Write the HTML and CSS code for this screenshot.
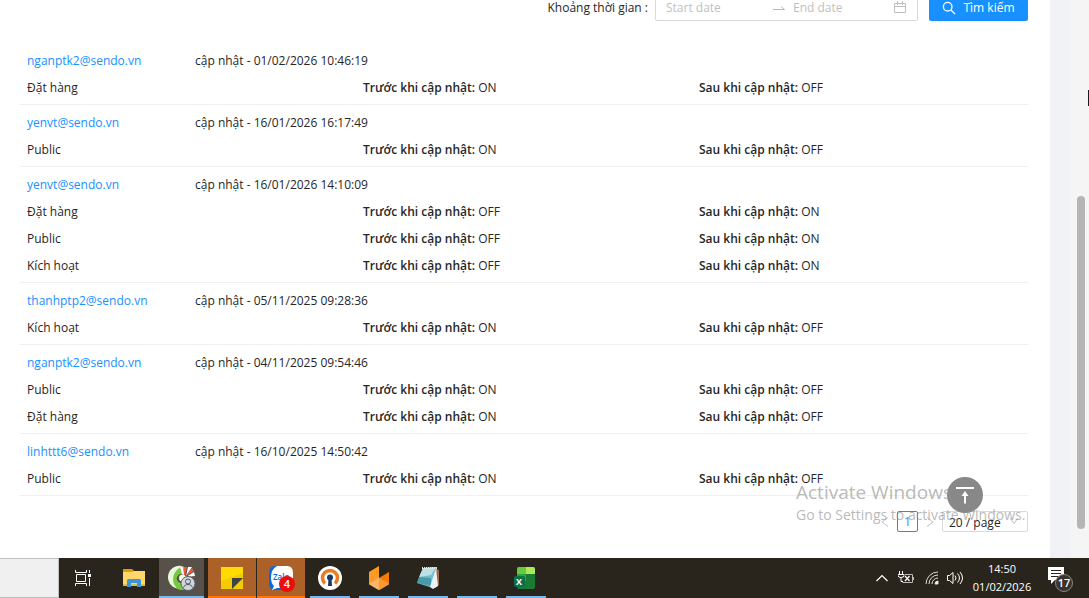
FILE: index.html
```html
<!DOCTYPE html>
<html lang="vi">
<head>
<meta charset="utf-8">
<title>Lịch sử cập nhật</title>
<link rel="stylesheet" href="styles.css">
</head>
<body>
<div class="viewport">
  <main class="content">
    <form class="filter">
      <label class="filter-label" for="start">Khoảng thời gian :</label>
      <div class="range">
        <input class="range-input" id="start" type="text" placeholder="Start date">
        <svg class="range-arrow" width="12" height="12" viewBox="0 0 12 12" fill="none" stroke="#b8b8b8"><path d="M0 7.5h11.5L8 4.5"/></svg>
        <input class="range-input range-end" type="text" placeholder="End date" aria-label="End date">
        <svg width="12" height="14" viewBox="0 0 12 14" fill="none" stroke="#bfbfbf"><path d="M.5 2.500h11v9H.5zM.5 5.500h11M3.500 0v4M8.500 0v4"/></svg>
      </div>
      <button class="search" type="button">
        <svg width="14" height="14" viewBox="0 0 14 14" fill="none" stroke="#fff" stroke-width="1.300"><circle cx="5.700" cy="5.700" r="4.300"/><path d="M9 9l4 4"/></svg>
        Tìm kiếm
      </button>
    </form>

    <section class="history">
      <article class="entry">
        <div class="row"><a class="user" href="#">nganptk2@sendo.vn</a><span class="when">cập nhật - 01/02/2026 10:46:19</span></div>
        <div class="row"><span class="field">Đặt hàng</span><span><b>Trước khi cập nhật:</b> ON</span><span><b>Sau khi cập nhật:</b> OFF</span></div>
      </article>
      <article class="entry">
        <div class="row"><a class="user" href="#">yenvt@sendo.vn</a><span class="when">cập nhật - 16/01/2026 16:17:49</span></div>
        <div class="row"><span class="field">Public</span><span><b>Trước khi cập nhật:</b> ON</span><span><b>Sau khi cập nhật:</b> OFF</span></div>
      </article>
      <article class="entry">
        <div class="row"><a class="user" href="#">yenvt@sendo.vn</a><span class="when">cập nhật - 16/01/2026 14:10:09</span></div>
        <div class="row"><span class="field">Đặt hàng</span><span><b>Trước khi cập nhật:</b> OFF</span><span><b>Sau khi cập nhật:</b> ON</span></div>
        <div class="row"><span class="field">Public</span><span><b>Trước khi cập nhật:</b> OFF</span><span><b>Sau khi cập nhật:</b> ON</span></div>
        <div class="row"><span class="field">Kích hoạt</span><span><b>Trước khi cập nhật:</b> OFF</span><span><b>Sau khi cập nhật:</b> ON</span></div>
      </article>
      <article class="entry">
        <div class="row"><a class="user" href="#">thanhptp2@sendo.vn</a><span class="when">cập nhật - 05/11/2025 09:28:36</span></div>
        <div class="row"><span class="field">Kích hoạt</span><span><b>Trước khi cập nhật:</b> ON</span><span><b>Sau khi cập nhật:</b> OFF</span></div>
      </article>
      <article class="entry">
        <div class="row"><a class="user" href="#">nganptk2@sendo.vn</a><span class="when">cập nhật - 04/11/2025 09:54:46</span></div>
        <div class="row"><span class="field">Public</span><span><b>Trước khi cập nhật:</b> ON</span><span><b>Sau khi cập nhật:</b> OFF</span></div>
        <div class="row"><span class="field">Đặt hàng</span><span><b>Trước khi cập nhật:</b> ON</span><span><b>Sau khi cập nhật:</b> OFF</span></div>
      </article>
      <article class="entry">
        <div class="row"><a class="user" href="#">linhttt6@sendo.vn</a><span class="when">cập nhật - 16/10/2025 14:50:42</span></div>
        <div class="row"><span class="field">Public</span><span><b>Trước khi cập nhật:</b> ON</span><span><b>Sau khi cập nhật:</b> OFF</span></div>
      </article>
    </section>

    <nav class="pager" aria-label="Pagination">
      <button class="step" type="button" aria-label="Previous page"><svg width="8" height="12" viewBox="0 0 8 12" fill="none" stroke="#bfbfbf"><path d="M7 1.500L1 6l6 4.500"/></svg></button>
      <button class="page" type="button">1</button>
      <button class="step" type="button" aria-label="Next page"><svg width="8" height="12" viewBox="0 0 8 12" fill="none" stroke="#bfbfbf"><path d="M1 1.500L7 6l-6 4.500"/></svg></button>
      <div class="size">
        <select class="size-select" aria-label="Page size"><option>20 / page</option></select>
        <svg class="size-arrow" width="10" height="10" viewBox="0 0 10 10" fill="none" stroke="#bfbfbf"><path d="M1 2l4 5.500L9 2"/></svg>
      </div>
    </nav>
  </main>
  <div class="gutter"></div>
  <div class="scrollbar"><div class="thumb"></div></div>
  <div class="caret"></div>
  <button class="to-top" type="button" aria-label="Back to top"><svg width="18" height="18" viewBox="0 0 18 18" fill="none" stroke="#fff" stroke-width="2"><path d="M0 2h18M9 17.500V7" /><path d="M5.500 10L9 5l3.500 5z" fill="#fff" stroke="none"/></svg></button>
  <div class="watermark">
    <div class="watermark-title">Activate Windows</div>
    <div class="watermark-text">Go to Settings to activate Windows.</div>
  </div>
</div>

<footer class="taskbar">
  <div class="searchbox"></div>
  <div class="apps">
    <button class="app" type="button" aria-label="Task view"><svg width="20" height="16" viewBox="0 0 20 16" fill="none" stroke="#fff"><path d="M.5 0v2.500h11V0M.5 16v-2.500h11V16M1.500 4.500h9v7h-9zM14.500 0v3M14.500 8v8"/><path d="M13 4h3v3h-3z" fill="#fff" stroke="none"/></svg></button>
    <button class="app" type="button" aria-label="File Explorer"><svg width="22" height="18" viewBox="0 0 22 18"><path d="M0 0h9l2 2h10v15H0z" fill="#e59a0c"/><path d="M0 3h9l2-1h11v15H0z" fill="#ffd76a"/><path d="M0 15h22v2H0z" fill="#e6b93f"/><path d="M4 18v-7l1-1h12l1 1v7h-4v-4H8v4z" fill="#3996dc"/></svg></button>
    <button class="app app-current" type="button" aria-label="Cốc Cốc"><svg width="28" height="28" viewBox="0 0 28 28"><path d="M14 3A11.500 11.500 0 1 0 19 25l-3-7a4.500 4.500 0 1 1-2-8z" fill="#78c83f"/><path d="M14 2A11.500 11.500 0 0 0 9 24.500 13 13 0 0 1 10 5z" fill="#e6f8d8"/><path d="M12 2.500h3.500L16 11l-2-1z" fill="#fff"/><path d="M15.500 3h3.500l-2 8h-1z" fill="#ed5a3b"/><path d="M20 3h4l-6 9z" fill="#fff"/><path d="M24 4l2 3-8 5z" fill="#ed5a3b"/><path d="M26 8l1 4-9 1z" fill="#fff"/><circle cx="14.500" cy="14" r="3.500" fill="#efffdf"/><circle cx="20" cy="19.500" r="7" fill="#cfd6de" stroke="#5c626a"/><circle cx="20" cy="17.500" r="2.500" fill="none" stroke="#4d5560"/><path d="M15.500 23.500c1-4 8-4 9 0" fill="none" stroke="#4d5560"/></svg></button>
    <button class="app app-alert" type="button" aria-label="Sticky Notes"><svg width="22" height="22" viewBox="0 0 22 22"><path d="M0 0h22v22H0z" fill="#ffdc00"/><path d="M0 14L22 6v16H0z" fill="#f3cb00"/><path d="M11 11h11L11 22z" fill="#3f4243"/></svg></button>
    <button class="app app-alert" type="button" aria-label="Zalo"><svg width="28" height="28" viewBox="0 0 28 28"><rect x="2" y="2" width="20" height="24" rx="6" fill="#0868e8"/><path d="M10 2h10q6 0 6 7v9q0 6-6 6H10l-5 2 2-4Q4 19 4 14q0-9 6-12z" fill="#fff"/><text x="6" y="16" class="zalo">Zalo</text><circle cx="20" cy="20" r="8" fill="#f00b0b"/><text x="20" y="24" class="badge">4</text></svg></button>
    <button class="app app-open" type="button" aria-label="OpenVPN"><svg width="24" height="24" viewBox="0 0 24 24"><circle cx="12" cy="12" r="12" fill="#fff"/><path d="M7 17.500a7.500 7.500 0 1 1 10 0" fill="none" stroke="#e97d27" stroke-width="3.500"/><circle cx="12" cy="11.500" r="3" fill="#1c3762"/><path d="M10.500 12h3l.5 8h-4z" fill="#1c3762"/></svg></button>
    <button class="app app-open" type="button" aria-label="Design app"><svg width="22" height="24" viewBox="0 0 22 24"><path d="M1 6l10-6v12L1 18z" fill="#ff9d20"/><path d="M1 6l10 6-10 6z" fill="#f99a2c"/><path d="M1 18l10-6v12z" fill="#ffb765"/><path d="M11 12l10 6-10 6z" fill="#ff9829"/><path d="M11 12l10-6v12z" fill="#f47b08"/><path d="M11 12l10 6-10 6-10-6z" fill="none" stroke="#ffc580" stroke-width=".5"/></svg></button>
    <button class="app app-open" type="button" aria-label="Notepad"><svg width="24" height="24" viewBox="0 0 24 24"><path d="M20 3l3 1v15l-4 3z" fill="#9b6840"/><path d="M7 2l14-1-4 21L1 17z" fill="#79bdcc"/><path d="M7 2l13-1-5 8-12 2z" fill="#b9e1e7"/><path d="M3 11l12 1v8L1 17z" fill="#499bac"/><path d="M20 2l2 18-5 3-3-2z" fill="#e9f2f5"/><path d="M6 2h15" stroke="#dfe9ea" stroke-width="2" stroke-dasharray="1 1"/></svg></button>
    <button class="app app-open" type="button" aria-label="Application"></button>
    <button class="app app-open" type="button" aria-label="Excel"><svg width="24" height="24" viewBox="0 0 24 24"><rect x="3" y="1" width="18" height="22" rx="2" fill="#187c34"/><path d="M3 3q0-2 2-2h7v7H3z" fill="#66cc3c"/><path d="M12 1h7q2 0 2 2v5h-9z" fill="#abeb5b"/><path d="M3 8h9v7H3z" fill="#2da144"/><rect y="10" width="11" height="11" rx="2" fill="#0d7048"/><text x="5" y="19" class="excel">X</text></svg></button>
  </div>
  <div class="tray">
    <svg width="12" height="8" viewBox="0 0 12 8" fill="none" stroke="#fff" stroke-width="1.200"><path d="M.5 7L6 1.500 11.500 7"/></svg>
    <svg width="16" height="14" viewBox="0 0 16 14" fill="none" stroke="#fff"><path d="M1.500 0v3M4.500 0v3M0 3.500h6v1q0 2-3 2t-3-2zM3 7v3.500h2" /><path d="M7 3.500h7.500v8H4.500M15.500 6v3" stroke="#bbb"/><path d="M7 5l4.500 5M11.500 5L7 10" stroke-width="1.200"/></svg>
    <svg width="14" height="14" viewBox="0 0 14 14" fill="none" stroke="#ddd"><path d="M1 13A12 12 0 0 1 13 1M4 13a9 9 0 0 1 9-9M7 13a6 6 0 0 1 6-6" /><path d="M10 13a3 3 0 0 1 3-3v3z" fill="#fff"/></svg>
    <svg width="17" height="14" viewBox="0 0 17 14" fill="none" stroke="#fff"><path d="M.5 4.500h2L6 1.500v11l-3.500-3h-2zM8 4.500q2 2.500 0 5M10.500 2.500q4 4.500 0 9M13 1q5 6 0 12"/></svg>
    <div class="clock"><div>14:50</div><div>01/02/2026</div></div>
    <button class="notices" type="button" aria-label="Notifications"><svg width="28" height="28" viewBox="0 0 28 28"><path d="M1 3h16v13H8l-4 4v-4H1z" fill="#fff"/><path d="M4 6.500h10M4 9.500h10M4 12.500h7" stroke="#2a241d"/><circle cx="17" cy="19" r="8.500" fill="#39342f" stroke="#8a8580"/><text x="17" y="23" class="badge">17</text></svg></button>
  </div>
</footer>
</body>
</html>
```

FILE: styles.css
```css
* { box-sizing: border-box; }
body {
  margin: 0;
  height: 100vh;
  display: flex;
  flex-direction: column;
  overflow: hidden;
  background: #fff;
  color: #262626;
  font: 12px/20px "Open Sans", "Noto Sans", sans-serif;
}
button, input, select { font: inherit; color: inherit; margin: 0; }
button { padding: 0; border: 0; background: none; }
svg { display: block; flex: none; }

.viewport { position: relative; flex: 1; min-height: 0; display: flex; overflow: hidden; }
.content { flex: 1; padding: 0 22px 0 20px; }
.gutter { width: 20px; background: #f0f2f5; }
.scrollbar { width: 19px; background: #f5f5f5; padding: 196px 4px 29px 7px; display: flex; }
.thumb { flex: 1; border-radius: 4px; background: #b5b5b5; }
.caret { position: absolute; right: 0; top: 90px; width: 1px; height: 16px; background: #1a1a24; }

/* Filter bar, scrolled partly out of view */
.filter { display: flex; justify-content: flex-end; align-items: center; margin-top: -5px; }
.filter-label { margin-right: 7px; }
.range {
  display: flex; align-items: center; width: 263px; height: 26px;
  padding: 0 11px 0 10px; border: 1px solid #d9d9d9; border-radius: 2px; margin-right: 11px;
}
.range-input { flex: 1; width: 0; min-width: 0; border: 0; padding: 0; outline: 0; background: none; }
.range-end { flex: none; width: 101px; }
.range-input::placeholder { color: #bfbfbf; opacity: 1; }
.range-arrow { margin-right: 8px; }
.search {
  display: flex; align-items: center; justify-content: center; gap: 7px;
  width: 99px; height: 26px; border-radius: 2px; background: #1890ff; color: #fff;
}

.history { margin-top: 22px; }
.entry { padding: 4px 0 3px; border-bottom: 1px solid #f0f0f0; }
.row { display: grid; grid-template-columns: 1fr 1fr 2fr 2fr; line-height: 27px; }
.row > * { padding-left: 7px; }
.user { color: #1890ff; text-decoration: none; }
.when { grid-column: span 2; }
.field { grid-column: span 2; }
b { font-weight: 600; }

.pager { display: flex; justify-content: flex-end; align-items: center; margin-top: 15px; }
.page { width: 21px; height: 21px; margin: 0 8px; border: 1px solid #1890ff; border-radius: 2px; color: #1890ff; line-height: 19px; }
.size { position: relative; margin-left: 8px; }
.size-select {
  display: block; width: 86px; height: 21px; padding: 1px 6px 0; border: 1px solid #d9d9d9; border-radius: 2px;
  background: none; appearance: none; line-height: 19px;
}
.size-arrow { position: absolute; right: 9px; top: 5px; }

.to-top {
  position: absolute; right: 106px; bottom: 45px; width: 36px; height: 36px; border-radius: 50%;
  background: #888; display: flex; align-items: center; justify-content: center;
}
.watermark { position: absolute; right: 57px; bottom: 33px; width: 236px; color: rgba(145, 145, 145, .65); white-space: nowrap; pointer-events: none; }
.watermark-title { font-size: 19px; line-height: 26px; }
.watermark-text { font-size: 14px; line-height: 20px; }

.taskbar { height: 40px; display: flex; background: #2a251c; color: #fff; }
.searchbox { width: 59px; margin-right: 1px; background: #f0f0f0; border: 1px solid #c0c0c0; border-width: 1px 1px 1px 0; }
.apps { display: flex; flex: 1; }
.app { width: 49px; display: flex; align-items: center; justify-content: center; border: 0 solid #2a251c; border-width: 0; }
.app-current { background: linear-gradient(#76b9ed, #76b9ed) bottom / 100% 2px no-repeat #57514a; border-width: 0 3px 0 1px; }
.app-alert { background: linear-gradient(#ff7500, #ff7500) bottom / 100% 2px no-repeat #ab6128; border-width: 0 0 0 1px; }
.app-open { background: linear-gradient(#76b9ed, #76b9ed) bottom / 40px 2px no-repeat; }
.tray { display: flex; align-items: center; gap: 8px; padding-right: 14px; }
.tray > svg:first-child { margin-right: 2px; }
.tray > svg:nth-child(2) { margin-right: 3px; }
.clock { text-align: center; font-size: 11px; line-height: 18px; width: 60px; }
.notices { margin-left: 7px; }

.badge { font: 600 11px "Open Sans", sans-serif; fill: #fff; text-anchor: middle; }
.zalo { font: 600 8px "Open Sans", sans-serif; fill: #0868e8; }
.excel { font: 700 9px "Open Sans", sans-serif; fill: #fff; text-anchor: middle; }
```
